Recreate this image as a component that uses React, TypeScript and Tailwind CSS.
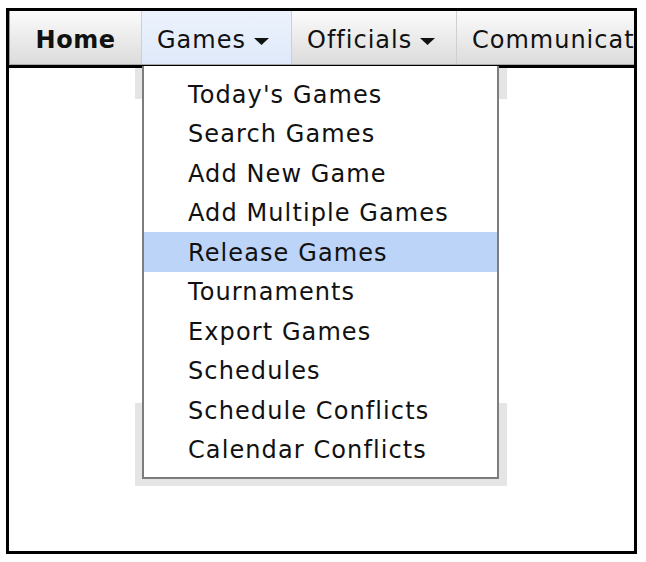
import React from 'react';

const font = { fontFamily: '"DejaVu Sans", Verdana, sans-serif' };

const gameItems = [
    "Today's Games",
    'Search Games',
    'Add New Game',
    'Add Multiple Games',
    'Release Games',
    'Tournaments',
    'Export Games',
    'Schedules',
    'Schedule Conflicts',
    'Calendar Conflicts',
];

function Caret() {
    return (
        <svg width="15" height="7" viewBox="0 0 15 7" className="ml-[8px] mt-[2px]">
            <path d="M0 0 L15 0 L7.5 7 Z" fill="#111" />
        </svg>
    );
}

export default function App() {
    return (
        <div className="w-[646px] h-[562px] bg-white pt-[8px] pl-[6px]" style={font}>
            <div className="relative w-[631px] h-[546px] border-[3px] border-black overflow-hidden">
                {/* top menu */}
                <div className="flex h-[54px] pt-[5px] border-b border-[#a8a8a8] text-[24px] tracking-[1px] text-[#111] bg-gradient-to-b from-[#fbfbfb] to-[#dcdcdc]">
                    <div className="flex items-center justify-center w-[133px] shrink-0 -mt-[5px] pt-[5px] border-l border-[#9a9a9a] border-r border-r-[#cfcfcf] font-bold tracking-[0.5px]">
                        Home
                    </div>
                    <div className="flex items-center w-[150px] shrink-0 -mt-[5px] pt-[5px] pl-[15px] bg-gradient-to-b from-[#edf3fd] to-[#dfe9fa] border-r border-[#cfcfcf]">
                        Games
                        <Caret />
                    </div>
                    <div className="flex items-center w-[165px] shrink-0 pl-[15px] border-r border-[#cfcfcf] -mt-[5px] pt-[5px]">
                        Officials
                        <Caret />
                    </div>
                    <div className="flex items-center shrink-0 pl-[15px] whitespace-nowrap">
                        Communications
                    </div>
                </div>

                {/* page content */}
                <div className="border-t-[3px] border-black">
                    <div className="ml-[126px] w-[372px] h-[31px] bg-[#e5e5e5]" />
                    <div className="ml-[126px] mt-[304px] w-[372px] h-[83px] bg-[#e5e5e5]" />
                </div>

                {/* games dropdown */}
                <div className="absolute left-[133px] top-[55px] w-[357px] bg-white border-2 border-t-0 border-[#7d7d7d] pt-[8px] pb-[8px] text-[24px] tracking-[1.1px] text-[#111]">
                    {gameItems.map((item) => (
                        <div
                            key={item}
                            className={
                                'h-[39.5px] flex items-center pl-[44px] pt-[2px] ' +
                                (item === 'Release Games' ? 'bg-[#bcd4f7]' : '')
                            }
                        >
                            {item}
                        </div>
                    ))}
                </div>
            </div>
        </div>
    );
}
